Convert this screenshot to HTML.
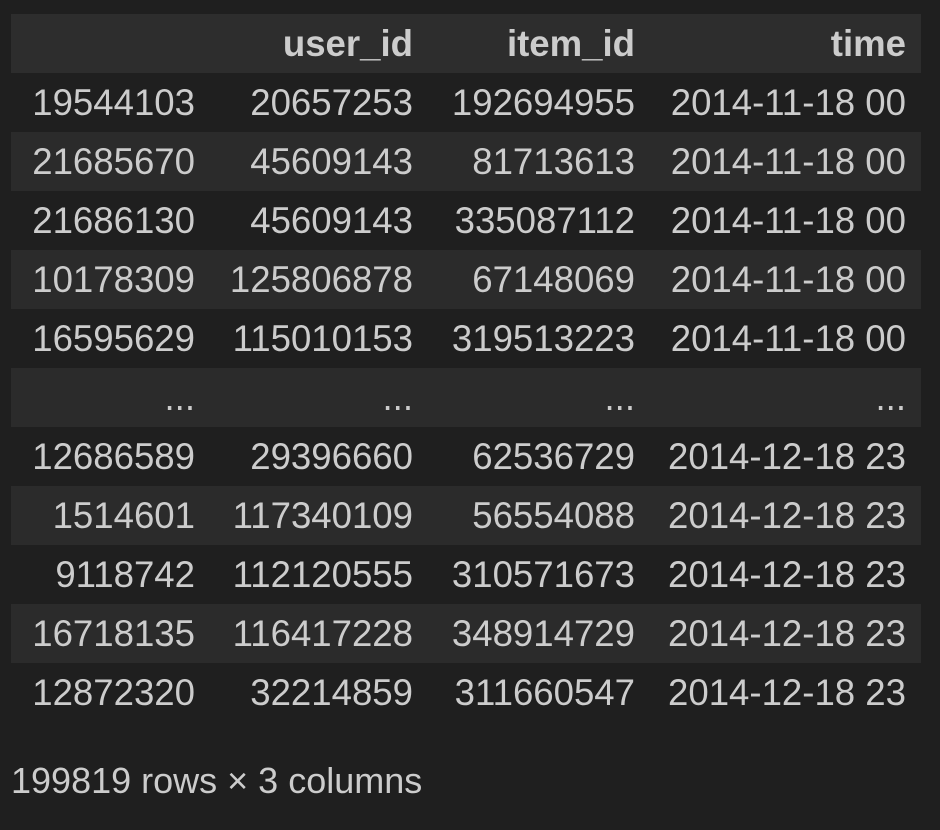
<!DOCTYPE html>
<html><head><style>
html,body{margin:0;padding:0;background:#1f1f1f;width:940px;height:830px;overflow:hidden}
body{font-family:"Liberation Sans",sans-serif;color:#cccccc}
table{position:absolute;left:11px;top:14px;width:910px;border-collapse:collapse;font-size:36.6px}
td,th{height:59px;padding:0;text-align:right;line-height:59px;white-space:nowrap}
th{font-weight:bold;background:#2d2d2d}
tr:nth-child(odd) td{background:#2b2b2b}
.c0{width:184px}.c1{width:218px}.c2{width:222px}.c3{width:271px}
.f{position:absolute;left:11px;top:760px;font-size:36px}
</style></head><body>
<table>
<tr><th class="c0"></th><th class="c1">user_id</th><th class="c2">item_id</th><th class="c3">time</th><th style="width:15px"></th></tr>
<tr><td>19544103</td><td>20657253</td><td>192694955</td><td>2014-11-18 00</td><td></td></tr>
<tr><td>21685670</td><td>45609143</td><td>81713613</td><td>2014-11-18 00</td><td></td></tr>
<tr><td>21686130</td><td>45609143</td><td>335087112</td><td>2014-11-18 00</td><td></td></tr>
<tr><td>10178309</td><td>125806878</td><td>67148069</td><td>2014-11-18 00</td><td></td></tr>
<tr><td>16595629</td><td>115010153</td><td>319513223</td><td>2014-11-18 00</td><td></td></tr>
<tr><td>...</td><td>...</td><td>...</td><td>...</td><td></td></tr>
<tr><td>12686589</td><td>29396660</td><td>62536729</td><td>2014-12-18 23</td><td></td></tr>
<tr><td>1514601</td><td>117340109</td><td>56554088</td><td>2014-12-18 23</td><td></td></tr>
<tr><td>9118742</td><td>112120555</td><td>310571673</td><td>2014-12-18 23</td><td></td></tr>
<tr><td>16718135</td><td>116417228</td><td>348914729</td><td>2014-12-18 23</td><td></td></tr>
<tr><td>12872320</td><td>32214859</td><td>311660547</td><td>2014-12-18 23</td><td></td></tr>
</table>
<div class="f">199819 rows × 3 columns</div>
</body></html>
